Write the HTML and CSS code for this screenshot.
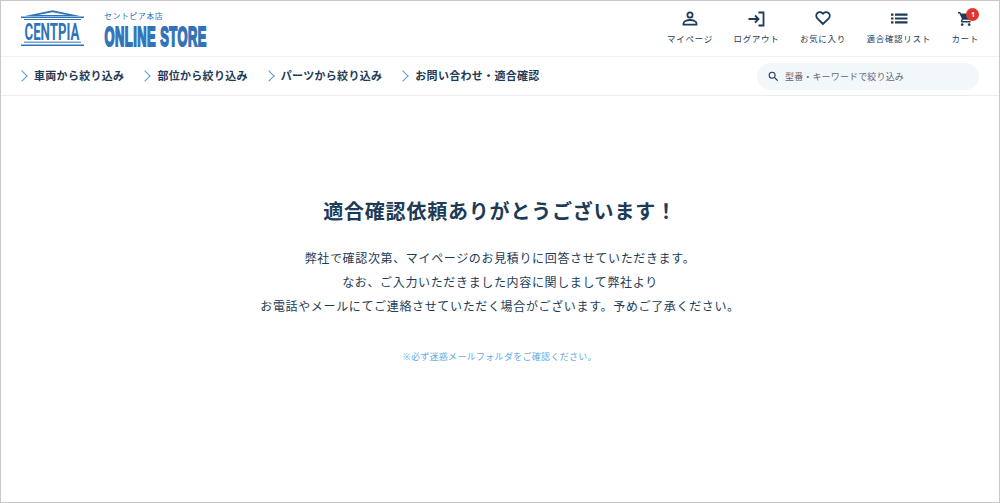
FILE: index.html
```html
<!DOCTYPE html>
<html lang="ja">
<head>
<meta charset="utf-8">
<title>適合確認依頼</title>
<link rel="stylesheet" href="styles.css">
</head>
<body>
<div class="frame">
  <header class="top">
    <a class="logo">
      <svg class="logo-mark" width="63" height="38" viewBox="0 0 63 38">
        <path d="M31.500 .3 L59 6 L4 6 Z M31.500 2.300 L17 5 L46 5 Z" fill="#3273b8" fill-rule="evenodd"/>
        <rect x="0" y="6.500" width="63" height="1.500" fill="#3273b8"/>
        <rect x="3" y="9" width="57" height="1" fill="#3273b8"/>
        <text transform="translate(3.500 30) scale(.54 1)" class="logo-word">CENTPIA</text>
        <rect x="3" y="31.700" width="57" height="1" fill="#3273b8"/>
        <rect x="0" y="34.500" width="63" height="1.500" fill="#3273b8"/>
      </svg>
      <div class="brand">
        <div class="brand-sub">セントピア本店</div>
        <svg class="brand-main" width="104" height="31" viewBox="0 0 104 31">
          <text transform="translate(.5 24.500) scale(.478 1)" class="brand-word">ONLINE STORE</text>
        </svg>
      </div>
    </a>
    <nav class="tools">
      <a class="tool">
        <svg width="20" height="20" viewBox="0 0 20 20" class="ico"><circle cx="10" cy="7" r="2.600"/><path d="M3.500 15.500c0-2.500 4-3.500 6.500-3.500s6.500 1 6.500 3.500v1.200h-13z"/></svg>
        <span>マイページ</span>
      </a>
      <a class="tool">
        <svg width="20" height="20" viewBox="0 0 20 20" class="ico"><path d="M2.500 11h10M9 7.500l3.500 3.500L9 14.500M12.500 4.500h5v13h-5"/></svg>
        <span>ログアウト</span>
      </a>
      <a class="tool">
        <svg width="20" height="20" viewBox="0 0 20 20" class="ico"><path d="M10 16 4.300 10.300a3.600 3.600 0 0 1 5.100-5.100l.6.600.6-.6a3.600 3.600 0 0 1 5.100 5.100z"/></svg>
        <span>お気に入り</span>
      </a>
      <a class="tool">
        <svg width="20" height="20" viewBox="0 0 20 20" class="solid"><path d="M2 5.500h2.500v2.200H2zM2 9.400h2.500v2.200H2zM2 13.300h2.500v2.200H2zM6 5.500h12.500v2.200H6zM6 9.400h12.500v2.200H6zM6 13.300h12.500v2.200H6z"/></svg>
        <span>適合確認リスト</span>
      </a>
      <a class="tool">
        <svg width="20" height="20" viewBox="-3.300 -3.700 28.600 28.600" class="solid"><path d="M7 18c-1.100 0-2 .9-2 2s.9 2 2 2 2-.9 2-2-.9-2-2-2zM1 2v2h2l3.600 7.600-1.350 2.450C4.520 15.370 5.480 17 7 17h12v-2H7.420a.25.25 0 0 1-.25-.25l.03-.12.900-1.630h7.450c.75 0 1.410-.41 1.750-1.030l3.580-6.490A1 1 0 0 0 20 4H5.210l-.94-2H1zm16 16c-1.100 0-2 .9-2 2s.9 2 2 2 2-.9 2-2-.9-2-2-2z"/></svg>
        <span>カート</span>
        <b class="badge">1</b>
      </a>
    </nav>
  </header>
  <div class="bar">
    <ul class="menu">
      <li class="menu-item">車両から絞り込み</li>
      <li class="menu-item">部位から絞り込み</li>
      <li class="menu-item">パーツから絞り込み</li>
      <li class="menu-item">お問い合わせ・適合確認</li>
    </ul>
    <div class="search">
      <svg width="13" height="13" viewBox="0 0 24 24" class="solid"><path d="M15.500 14h-.79l-.28-.27A6.470 6.470 0 0 0 16 9.500 6.500 6.500 0 1 0 9.500 16c1.610 0 3.090-.59 4.230-1.570l.27.28v.79l5 4.990L20.490 19l-4.990-5zm-6 0C7.010 14 5 11.990 5 9.500S7.010 5 9.500 5 14 7.010 14 9.500 11.990 14 9.500 14z"/></svg>
      <span>型番・キーワードで絞り込み</span>
    </div>
  </div>
  <main class="done">
    <h1>適合確認依頼ありがとうございます！</h1>
    <p class="lead">弊社で確認次第、マイページのお見積りに回答させていただきます。<br>なお、ご入力いただきました内容に関しまして弊社より<br>お電話やメールにてご連絡させていただく場合がございます。予めご了承ください。</p>
    <p class="note">※必ず迷惑メールフォルダをご確認ください。</p>
  </main>
</div>
</body>
</html>
```
FILE: styles.css
```css
* { box-sizing: border-box; }
html, body { margin: 0; height: 100%; }
body {
  font-family: "Noto Sans", "Noto Sans CJK JP", sans-serif;
  color: #1d3b57;
  background: #fff;
}
.frame {
  height: 503px;
  border: 1px solid #c8c8c8;
  display: flex;
  flex-direction: column;
}
.top {
  height: 56px;
  display: flex;
  justify-content: space-between;
  align-items: center;
  padding: 0 20px;
  border-bottom: 1px solid #f0f0f0;
}
.logo { display: flex; align-items: center; gap: 20px; }
.logo-mark { display: block; }
.logo-word {
  font-family: Roboto, sans-serif;
  font-weight: 700;
  font-size: 24.500px;
  fill: #3273b8;
}
.brand { display: flex; flex-direction: column; }
.brand-sub { font-size: 8px; line-height: 11px; color: #3273b8; letter-spacing: .45px; }
.brand-main { display: block; margin-bottom: -5px; }
.brand-word {
  font-family: "Liberation Sans", sans-serif;
  font-weight: 700;
  font-size: 27px;
  letter-spacing: 1px;
  fill: #3273b8;
  stroke: #3273b8;
  stroke-width: 2px;
}
.ico { fill: none; stroke: #1d3b57; stroke-width: 1.800px; }
.solid { fill: #1d3b57; }
.tools { display: flex; gap: 20.500px; padding-bottom: 4px; }
.tool {
  position: relative;
  display: flex;
  flex-direction: column;
  align-items: center;
  gap: 5px;
  font-size: 8.500px;
  line-height: 12px;
  letter-spacing: .7px;
}
.tool svg { display: block; }
.badge {
  position: absolute;
  top: 0;
  left: 15px;
  width: 13px;
  height: 13px;
  border-radius: 50%;
  background: #e0352b;
  color: #fff;
  font-size: 7px;
  line-height: 13px;
  font-weight: 700;
  text-align: center;
  letter-spacing: 0;
}
.bar {
  height: 39px;
  display: flex;
  justify-content: space-between;
  align-items: center;
  padding: 0 20px;
  border-bottom: 1px solid #ececec;
}
.menu { list-style: none; margin: 0; padding: 0; display: flex; gap: 20px; }
.menu-item {
  position: relative;
  padding-left: 13px;
  font-size: 11px;
  font-weight: 700;
  letter-spacing: .3px;
  line-height: 16px;
}
.menu-item::before {
  content: "";
  position: absolute;
  left: -3px;
  top: 4px;
  width: 7px;
  height: 7px;
  border-top: 1.800px solid #5a9bd5;
  border-right: 1.800px solid #5a9bd5;
  transform: rotate(45deg);
}
.search {
  width: 222px;
  height: 27px;
  border-radius: 14px;
  background: #f2f7fa;
  display: flex;
  align-items: center;
  gap: 5px;
  padding-left: 10px;
  font-size: 9px;
  letter-spacing: .15px;
  color: #667;
}
.done { flex: 1; text-align: center; padding-top: 101px; }
.done h1 {
  margin: 0 0 20px;
  font-size: 20px;
  line-height: 30px;
  font-weight: 700;
  letter-spacing: .8px;
}
.lead {
  margin: 0 0 31px;
  font-size: 12px;
  line-height: 24px;
  letter-spacing: .65px;
}
.note {
  margin: 0;
  font-size: 9px;
  line-height: 14px;
  letter-spacing: .3px;
  color: #64ace4;
}
```
